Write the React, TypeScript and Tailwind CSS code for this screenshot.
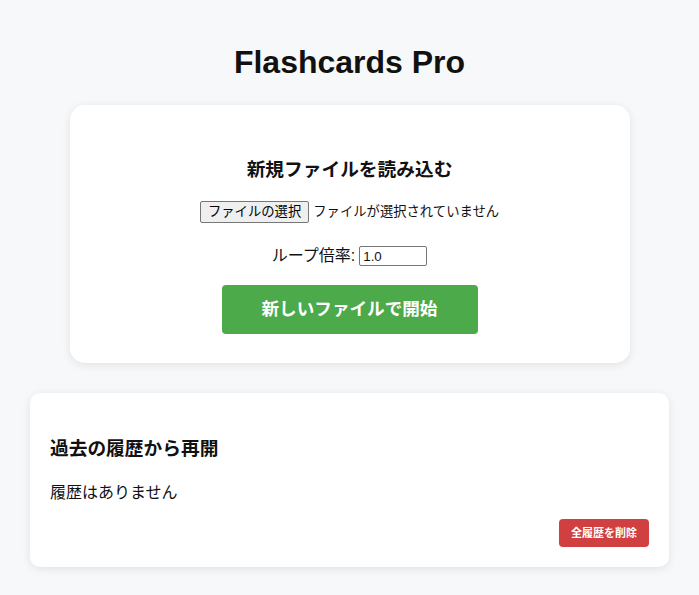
import React from "react";

const font = { fontFamily: '"Liberation Sans", "Noto Sans CJK JP", sans-serif' };

export default function App() {
  return (
    <div
      className="min-h-[595px] w-full bg-[#f7f8fa] px-[30px] pt-[44px] pb-[29px] text-[#111]"
      style={font}
    >
      <h1 className="text-center text-[32px] font-bold leading-[37px]">Flashcards Pro</h1>

      <div className="mx-auto mt-[24px] flex w-[560px] flex-col items-center rounded-[15px] bg-white px-10 pt-[53px] pb-[29px] shadow-[0_2px_10px_rgba(0,0,0,0.09)]">
        <h3 className="text-[18.72px] font-bold leading-6">新規ファイルを読み込む</h3>

        <div className="mt-[19px] flex items-center text-[13.33px]">
          <button className="h-[22px] rounded-[2px] border border-[#767676] bg-[#efefef] px-[7px] leading-none text-black">
            ファイルの選択
          </button>
          <span className="ml-[4px]">ファイルが選択されていません</span>
        </div>

        <div className="mt-[23px] flex items-center">
          <span className="text-[16px] leading-5">ループ倍率:</span>
          <input
            defaultValue="1.0"
            className="ml-[4px] h-[20px] w-[68px] rounded-[2px] border border-[#767676] px-[3px] text-[13.33px] leading-none outline-none"
          />
        </div>

        <button className="mt-[19px] h-[49px] w-[256px] rounded-[4px] bg-[#4caa4b] text-[17.6px] font-bold text-white">
          新しいファイルで開始
        </button>
      </div>

      <div className="mt-[30px] rounded-[10px] bg-white px-5 pt-[44px] pb-[20px] shadow-[0_2px_10px_rgba(0,0,0,0.09)]">
        <h3 className="text-[18.72px] font-bold leading-6">過去の履歴から再開</h3>
        <p className="mt-[20px] text-[16px] leading-6">履歴はありません</p>
        <div className="mt-[14px] flex justify-end">
          <button className="h-[28px] rounded-[4px] bg-[#d04040] px-[12px] text-[11px] font-bold text-white">
            全履歴を削除
          </button>
        </div>
      </div>
    </div>
  );
}
